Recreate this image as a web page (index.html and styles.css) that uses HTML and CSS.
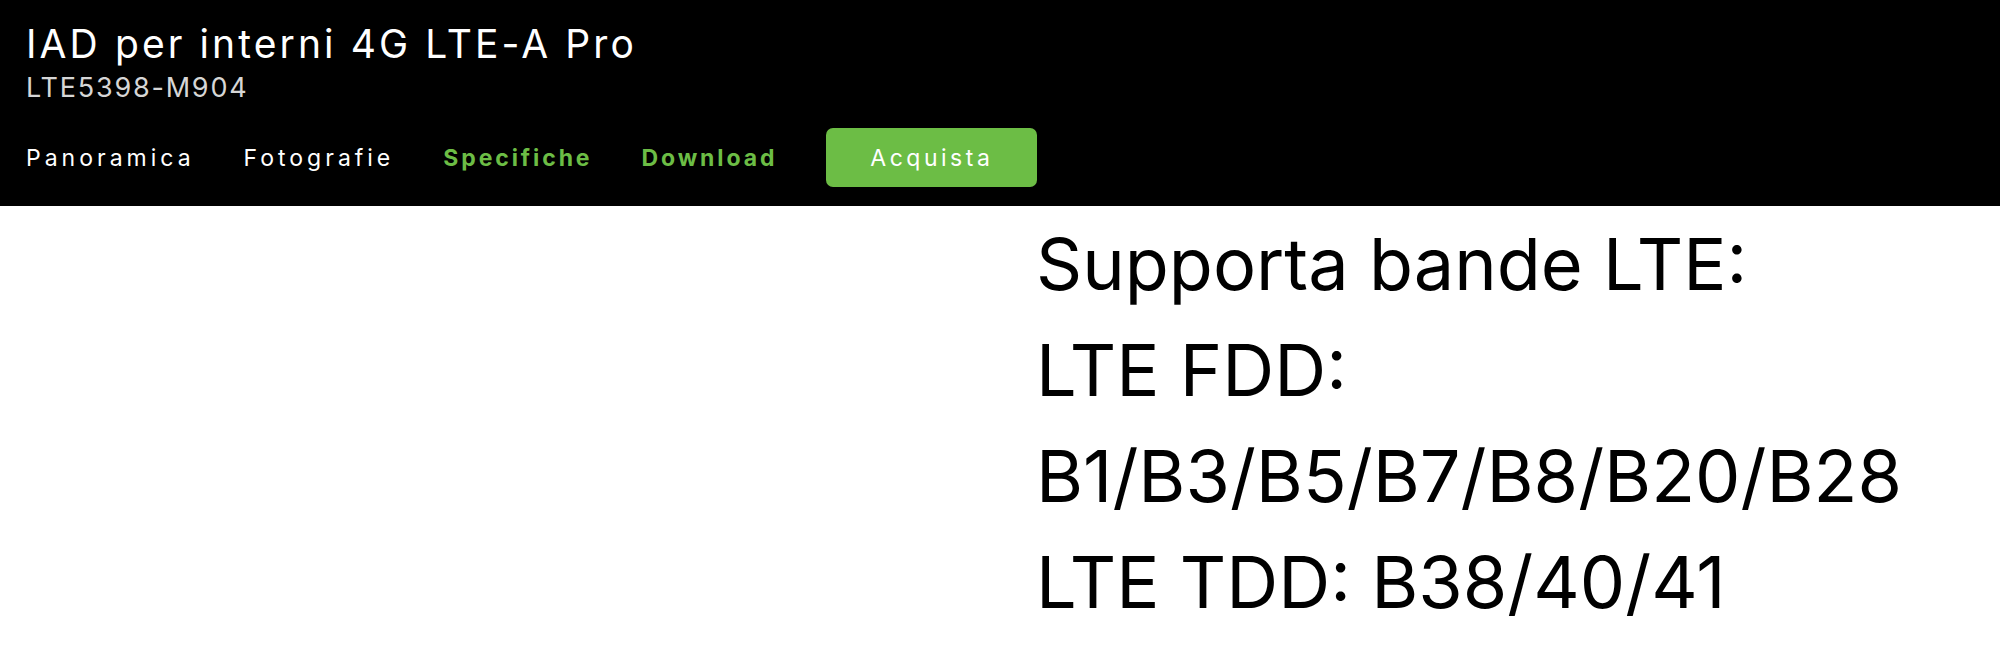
FILE: index.html
```html
<!DOCTYPE html>
<html lang="it">
<head>
  <meta charset="UTF-8">
  <title>IAD per interni 4G LTE-A Pro - LTE5398-M904</title>
  <link rel="stylesheet" href="styles.css">
</head>
<body>
  <!-- Barra prodotto -->
  <header class="product-bar">
    <h1 class="product-title">IAD per interni 4G LTE-A Pro</h1>
    <p class="product-model">LTE5398-M904</p>
    <nav class="product-nav">
      <a href="#" class="nav-link">Panoramica</a>
      <a href="#" class="nav-link">Fotografie</a>
      <a href="#" class="nav-link active">Specifiche</a>
      <a href="#" class="nav-link active">Download</a>
      <a href="#" class="buy-button">Acquista</a>
    </nav>
  </header>

  <!-- Specifiche -->
  <main class="spec-section">
    <div class="spec-image"></div>
    <div class="spec-text">
      <p>Supporta bande LTE:</p>
      <p>LTE FDD:</p>
      <p>B1/B3/B5/B7/B8/B20/B28</p>
      <p>LTE TDD: B38/40/41</p>
    </div>
  </main>
</body>
</html>
```

FILE: styles.css
```css
body {
  margin: 0;
  font-family: Inter, "Noto Sans", sans-serif;
  background: #fff;
  color: #000;
}
.product-bar {
  background: #000;
  color: #fff;
  padding: 15px 26px 19px;
}
.product-title {
  margin: 0;
  font-size: 39px;
  font-weight: 400;
  line-height: 57px;
  letter-spacing: 3.1px;
}
.product-model {
  margin: 0;
  font-size: 27px;
  line-height: 32px;
  color: #d6d6d6;
  letter-spacing: 1.8px;
}
.product-nav {
  display: flex;
  align-items: center;
  margin-top: 24px;
}
.nav-link {
  margin-right: 49px;
  color: #fff;
  text-decoration: none;
  font-size: 23px;
  letter-spacing: 4px;
}
.nav-link.active {
  color: #6cbd45;
  font-weight: 700;
  letter-spacing: 2.9px;
}
.buy-button {
  display: flex;
  align-items: center;
  justify-content: center;
  width: 211px;
  height: 59px;
  background: #6cbd45;
  border-radius: 7px;
  color: #fff;
  text-decoration: none;
  font-size: 23px;
  letter-spacing: 3.5px;
}
.spec-section {
  display: grid;
  grid-template-columns: 1fr 1fr;
}
.spec-text {
  padding: 5px 0 0 36px;
}
.spec-text p {
  margin: 0;
  font-size: 72px;
  line-height: 106px;
}
```
